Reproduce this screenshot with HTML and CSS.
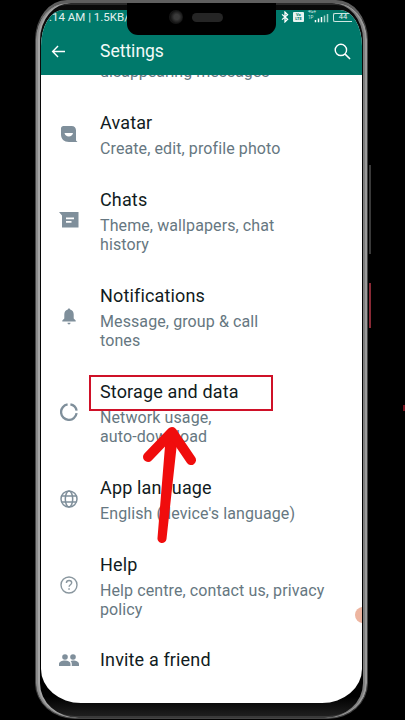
FILE: index.html
```html
<!DOCTYPE html>
<html lang="en">
<head>
<meta charset="utf-8">
<title>Settings</title>
<link rel="stylesheet" href="styles.css">
</head>
<body>
<div class="stage">
  <div class="phone">
    <div class="screen">
      <header class="appbar">
        <div class="status">
          <span class="status-time">.14 AM | 1.5KB/s</span>
          <div class="status-icons">
            <svg class="i-bt" viewBox="0 0 10 16"><path d="M1 4.500 8.500 11 5 14.500V1.500L8.500 5 1 11.500" fill="none" stroke="#fff" stroke-width="1.700"/></svg>
            <span class="volte"><span class="volte-t">Vo<br>LTE</span></span>
            <div class="signal">
              <span class="net">4G+<br>1P</span>
              <svg class="i-sig" viewBox="0 0 20 11"><path d="M1 8h2v3H1zM5 6h2v5H5zM9 4h2v7H9z" fill="#fff"/><path d="M13 2h2v9h-2zM17 0h2v11h-2z" fill="#9fd0c6"/></svg>
            </div>
            <span class="battery"><span class="battery-t">44</span></span>
          </div>
        </div>
        <div class="toolbar">
          <svg class="i-back" viewBox="0 0 16 14"><path d="M15 7H2M7.500 1.200 1.700 7l5.800 5.800" fill="none" stroke="#fff" stroke-width="1.500"/></svg>
          <h1 class="title">Settings</h1>
          <svg class="i-search" viewBox="0 0 18 18"><circle cx="7.300" cy="7.300" r="6" fill="none" stroke="#fff" stroke-width="1.500"/><path d="M11.800 11.800 17 17" stroke="#fff" stroke-width="1.600" fill="none"/></svg>
        </div>
      </header>
      <main class="list">
        <div class="clipped">disappearing messages</div>

        <div class="row">
          <div class="ico"><svg width="18" height="18" viewBox="0 0 18 18"><path d="M3.500 1h8c3 0 4.500 2 4.500 4.500v10L17.500 17H9C4 17 1 14 1 9.500V3.500C1 2 2 1 3.500 1z" fill="#7f8f9b"/><path d="M4.500 8h8.500c-.4 2.200-2 3.500-4.200 3.500S4.900 10.200 4.500 8z" fill="#fff"/></svg></div>
          <div class="txt"><div class="name">Avatar</div><div class="sub">Create, edit, profile photo</div></div>
        </div>

        <div class="row">
          <div class="ico"><svg width="20" height="16" viewBox="0 0 20 16"><path d="M0 0h19.500v15.500H3V3.500z" fill="#7f8f9b"/><path d="M7 5.500h8v1.700H7zM7 9h5.500v1.700H7z" fill="#fff"/></svg></div>
          <div class="txt"><div class="name">Chats</div><div class="sub">Theme, wallpapers, chat<br>history</div></div>
        </div>

        <div class="row">
          <div class="ico"><svg width="14" height="17" viewBox="0 0 14 16"><path d="M7 0c.7 0 1.200.5 1.200 1.100 2.300.6 3.500 2.500 3.500 4.900v4l2 2v1H.3v-1l2-2V6c0-2.400 1.200-4.300 3.500-4.900C5.800.5 6.300 0 7 0zM5.500 14.300h3C8.500 15.300 7.800 16 7 16s-1.500-.7-1.500-1.700z" fill="#7f8f9b"/></svg></div>
          <div class="txt"><div class="name">Notifications</div><div class="sub">Message, group &amp; call<br>tones</div></div>
        </div>

        <div class="row">
          <div class="ico"><svg width="18" height="18" viewBox="0 0 18 18"><path d="M10.400 1.400a7.800 7.800 0 0 1 6.200 6.200M16.600 10.200A7.800 7.800 0 1 1 7.600 1.400" fill="none" stroke="#7f8f9b" stroke-width="2.300"/></svg></div>
          <div class="txt"><div class="name">Storage and data</div><div class="sub">Network usage,<br>auto-download</div></div>
        </div>

        <div class="row">
          <div class="ico"><svg width="18" height="18" viewBox="0 0 18 18"><g fill="none" stroke="#7f8f9b" stroke-width="1.500"><circle cx="9" cy="9" r="8"/><ellipse cx="9" cy="9" rx="3.700" ry="8"/><path d="M1.600 6h14.800M1.600 12h14.800"/></g></svg></div>
          <div class="txt"><div class="name">App language</div><div class="sub">English (device's language)</div></div>
        </div>

        <div class="row">
          <div class="ico"><svg width="18" height="18" viewBox="0 0 18 18"><circle cx="9" cy="9" r="8" fill="none" stroke="#8a979f" stroke-width="1.400"/><path d="M6.400 7c0-1.500 1.200-2.500 2.700-2.500s2.600 1 2.600 2.200c0 2-2.600 2-2.600 4" fill="none" stroke="#8a979f" stroke-width="1.400"/><path d="M8.300 12.300h1.500v1.500H8.300z" fill="#8a979f"/></svg></div>
          <div class="txt"><div class="name">Help</div><div class="sub">Help centre, contact us, privacy<br>policy</div></div>
        </div>

        <div class="row row-single">
          <div class="ico"><svg width="20" height="12" viewBox="0 0 20 12"><circle cx="6" cy="3" r="2.800" fill="#7f8f9b"/><circle cx="14" cy="3" r="2.800" fill="#7f8f9b"/><path d="M0 12V10c0-2 2.700-3.400 6-3.400s5.500 1.400 5.500 3.400v2zM12.800 12v-2c0-1.200-.4-2.200-1.200-3 .8-.2 1.600-.4 2.400-.4 3.300 0 6 1.400 6 3.400v2z" fill="#7f8f9b"/></svg></div>
          <div class="txt"><div class="name">Invite a friend</div></div>
        </div>
      </main>
      <span class="touch-dot"></span>
    </div>

    <div class="notch">
      <span class="camera"></span>
      <span class="speaker"></span>
    </div>
  </div>

  <span class="side side-a"></span>
  <span class="side side-b"></span>
  <span class="edge-mark"></span>
  <div class="highlight"></div>
  <svg class="arrow" viewBox="0 0 60 124">
    <path d="M16.500 114 25 10 37 10 25.500 115a4.500 4.500 0 0 1-9 -1z" fill="#f00d0d"/>
    <path d="M7 33 31 8 50 36" fill="none" stroke="#f00d0d" stroke-width="10" stroke-linecap="round" stroke-linejoin="round"/>
  </svg>
</div>
</body>
</html>
```

FILE: styles.css
```css
* { box-sizing: border-box; }
html, body { margin: 0; height: 100%; background: #000; overflow: hidden; }
body { font-family: Roboto, "Noto Sans", sans-serif; }

.stage { position: relative; width: 405px; height: 720px; padding: 0 37px 1px 35px; }

.phone {
  position: relative;
  height: 719px;
  padding: 10px 5px 15px 5px;
  border-radius: 32px 32px 40px 40px / 40px 40px 36px 36px;
  background: linear-gradient(#0a0a0a, #000 97%, #222);
  border: 1px solid #444;
  border-top: 3px solid #5f5f5f;
  box-shadow: inset 2px 0 0 #8a8a8a, inset 4px 0 0 #a4a4a4, inset -2px 0 0 #9a9a9a, inset -4px 0 0 #7c7c7c, inset 0 -2px 0 #3a3a3a, inset 0 2px 0 #2a2a2a;
}

.screen {
  position: relative;
  height: calc(100% + 3px);
  margin-top: -3px;
  overflow: hidden;
  background: #fff;
  border-radius: 22px 22px 40px 40px / 36px 36px 34px 34px;
  display: flex;
  flex-direction: column;
}

.appbar { position: relative; z-index: 1; flex: none; height: 65px; background: #00796b; color: #fff; }

.status { height: 14px; display: flex; justify-content: space-between; align-items: center; padding: 0 10px 0 8px; }
.status-time { font-size: 11.500px; white-space: nowrap; color: #e4f0ee; }
.status-icons { display: flex; align-items: center; gap: 4px; }
.i-bt { width: 8px; height: 12px; }
.volte { width: 11px; height: 10px; background: #e8f3f1; border-radius: 1px; display: flex; align-items: center; justify-content: center; }
.volte-t { color: #00796b; font-size: 4px; line-height: 4px; text-align: center; font-weight: 700; }
.signal { position: relative; width: 21px; height: 12px; display: flex; justify-content: flex-end; align-items: flex-end; }
.net { position: absolute; left: 0; top: -2px; font-size: 4.500px; line-height: 6px; color: #d5e9e5; }
.i-sig { width: 15px; height: 10px; }
.battery { width: 19px; height: 9px; border: 1px solid #cfe6e1; border-right: 0; border-radius: 2px 0 0 2px; display: flex; align-items: center; justify-content: center; }
.battery-t { font-size: 7.500px; line-height: 8px; color: #e4f0ee; }

.toolbar { height: 51px; display: flex; align-items: center; padding: 3px 11px 0 10px; }
.i-back { width: 15px; height: 13px; flex: none; }
.title { margin: 0 0 0 34px; flex: 1; font-size: 17.500px; line-height: 24px; font-weight: 400; color: #f2faf8; }
.i-search { width: 17px; height: 17px; flex: none; }

.list { flex: 1; min-height: 0; color: #111b21; }
.clipped { height: 7px; margin-top: -3px; margin-bottom: 16px; padding-left: 59px; font-size: 16px; line-height: 0; color: #667781; white-space: nowrap; }

.row { display: flex; align-items: center; padding: 0 20px 0 0; height: 96px; }
.row:nth-of-type(2), .row:nth-of-type(6) { height: 77px; }
.row-single { height: 53px; }
.ico { flex: none; width: 59px; display: flex; justify-content: center; padding-right: 4px; }
.name { font-size: 18px; line-height: 26px; letter-spacing: 0.15px; }
.sub { margin-top: 3px; font-size: 16px; line-height: 19px; color: #667781; letter-spacing: 0.1px; }

.touch-dot { position: absolute; left: 314px; top: 597px; width: 16px; height: 16px; border-radius: 50%; background: #edb5a0; }

.notch {
  position: absolute; z-index: 2; left: 91px; top: 0; width: 149px; height: 32px;
  background: #000; border-radius: 0 0 11px 11px;
  display: flex; align-items: center; justify-content: center; gap: 9px;
  padding: 0 0 4px 0;
}
.camera { width: 14px; height: 14px; border-radius: 50%; background: radial-gradient(circle at 55% 50%, #3a3a3a 0 25%, #141414 60%, #1f1f1f); margin-left: -12px; }
.speaker { width: 31px; height: 9px; border-radius: 5px; background: #252525; }

.side { position: absolute; left: 369px; width: 2px; }
.side-a { top: 165px; height: 89px; background: #3a3a3a; }
.side-b { top: 283px; height: 45px; background: #8a2a36; }
.edge-mark { position: absolute; left: 403px; top: 405px; width: 2px; height: 6px; background: #7a1420; }

.highlight { position: absolute; z-index: 3; left: 89px; top: 375px; width: 184px; height: 36px; border: 2px solid #cf1128; }
.arrow { position: absolute; z-index: 3; left: 141px; top: 424px; width: 60px; height: 124px; }
```
